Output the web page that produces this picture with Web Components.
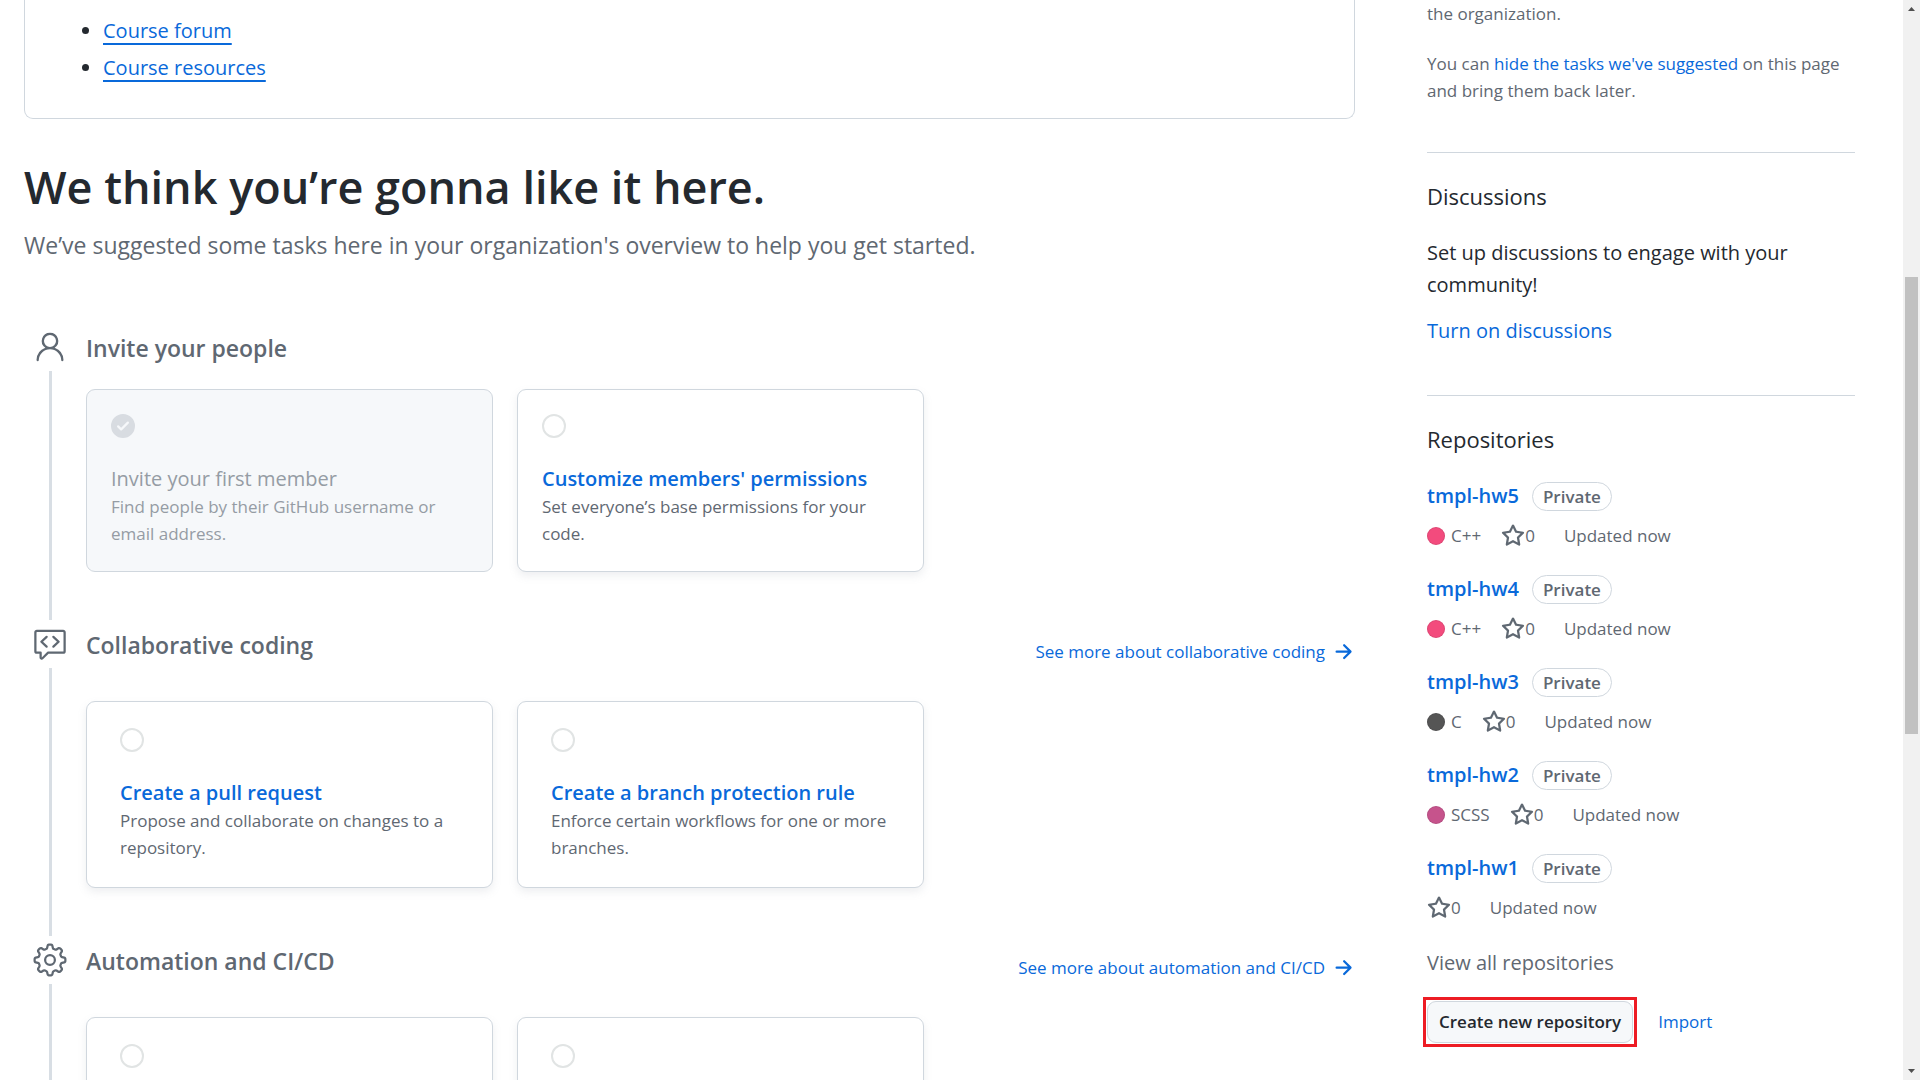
<!DOCTYPE html>
<html lang="en">
<head>
<meta charset="utf-8">
<title>Organization overview</title>
<style>
  :root {
    --fg: #24292f;
    --muted: #5f6872;
    --link: #0969da;
    --line: #d0d7de;
    --rail: #d8dee4;
    --text-s: 17px;
    --text-m: 20px;
    --text-l: 22px;
    --text-xl: 23px;
  }
  html, body { height: 100%; }
  body {
    margin: 0;
    overflow: hidden;
    background: #fff;
    color: var(--fg);
    font-family: "Open Sans", "Noto Sans", sans-serif;
    font-size: var(--text-m);
    line-height: 32px;
  }
</style>
</head>
<body>
<org-page>
  <readme-box slot="main">
    <a href="#forum">Course forum</a>
    <a href="#resources">Course resources</a>
  </readme-box>
  <page-intro slot="main" heading="We think you’re gonna like it here.">We’ve suggested some tasks here in your organization's overview to help you get started.</page-intro>
  <task-section slot="main" icon="person" heading="Invite your people">
    <task-card done heading="Invite your first member">Find people by their GitHub username or email address.</task-card>
    <task-card heading="Customize members' permissions">Set everyone’s base permissions for your code.</task-card>
  </task-section>
  <task-section slot="main" icon="review" heading="Collaborative coding" more="See more about collaborative coding">
    <task-card wide heading="Create a pull request">Propose and collaborate on changes to a repository.</task-card>
    <task-card wide heading="Create a branch protection rule">Enforce certain workflows for one or more branches.</task-card>
  </task-section>
  <task-section slot="main" icon="gear" heading="Automation and CI/CD" more="See more about automation and CI/CD">
    <task-card wide></task-card>
    <task-card wide></task-card>
  </task-section>

  <side-note slot="side"></side-note>
  <side-section slot="side" heading="Discussions">
    <discussion-prompt></discussion-prompt>
  </side-section>
  <side-section slot="side" heading="Repositories">
    <repo-item name="tmpl-hw5" lang="C++" color="#f34b7d"></repo-item>
    <repo-item name="tmpl-hw4" lang="C++" color="#f34b7d"></repo-item>
    <repo-item name="tmpl-hw3" lang="C" color="#555555"></repo-item>
    <repo-item name="tmpl-hw2" lang="SCSS" color="#c6538c"></repo-item>
    <repo-item name="tmpl-hw1"></repo-item>
    <repo-actions></repo-actions>
  </side-section>
</org-page>

<script>
const ICONS = {
  person: [24, 'M12 2.5a5.5 5.5 0 013.096 10.047 9.005 9.005 0 015.9 8.181.75.75 0 11-1.499.044 7.5 7.5 0 00-14.993 0 .75.75 0 01-1.5-.045 9.005 9.005 0 015.9-8.18A5.5 5.5 0 0112 2.5zM8 8a4 4 0 118 0 4 4 0 01-8 0z'],
  review: [24, 'M10.3 6.74a.75.75 0 01-.04 1.06l-2.908 2.7 2.908 2.7a.75.75 0 11-1.02 1.1l-3.5-3.25a.75.75 0 010-1.1l3.5-3.25a.75.75 0 011.06.04zm3.44 1.06a.75.75 0 111.02-1.1l3.5 3.25a.75.75 0 010 1.1l-3.5 3.25a.75.75 0 11-1.02-1.1l2.908-2.7-2.908-2.7zM1.5 4.25c0-.966.784-1.75 1.75-1.75h17.5c.966 0 1.75.784 1.75 1.75v12.5a1.75 1.75 0 01-1.75 1.75h-9.69l-3.573 3.573A1.457 1.457 0 015 21.043V18.5H3.25a1.75 1.75 0 01-1.75-1.75V4.25zM3.25 4a.25.25 0 00-.25.25v12.5c0 .138.112.25.25.25h2.5a.75.75 0 01.75.75v3.19l3.72-3.72a.75.75 0 01.53-.22h10a.25.25 0 00.25-.25V4.25a.25.25 0 00-.25-.25H3.25z'],
  gear: [24, 'M16 12a4 4 0 11-8 0 4 4 0 018 0zm-1.5 0a2.5 2.5 0 11-5 0 2.5 2.5 0 015 0zM12 1c-.268 0-.534.01-.797.028-.763.055-1.345.617-1.512 1.304l-.352 1.45c-.02.078-.09.172-.225.22a8.45 8.45 0 00-.728.303c-.13.06-.246.044-.315.002l-1.274-.776c-.604-.368-1.412-.354-1.99.147-.403.348-.78.726-1.129 1.128-.5.579-.515 1.387-.147 1.99l.776 1.275c.042.069.059.185-.002.315-.112.237-.213.48-.302.728-.05.135-.143.206-.221.225l-1.45.352c-.687.167-1.249.749-1.304 1.512a11.149 11.149 0 000 1.594c.055.763.617 1.345 1.304 1.512l1.45.352c.078.02.172.09.22.225.09.248.191.491.303.729.06.129.044.245.002.314l-.776 1.274c-.368.604-.354 1.412.147 1.99.348.403.726.78 1.128 1.129.579.5 1.387.515 1.99.147l1.275-.776c.069-.042.185-.059.315.002.237.112.48.213.728.302.135.05.206.143.225.221l.352 1.45c.167.687.749 1.249 1.512 1.303a11.125 11.125 0 001.594 0c.763-.054 1.345-.616 1.512-1.303l.352-1.45c.02-.078.09-.172.225-.22.248-.09.491-.191.729-.303.129-.06.245-.044.314-.002l1.274.776c.604.368 1.412.354 1.99-.147.403-.348.78-.726 1.129-1.128.5-.579.515-1.387.147-1.99l-.776-1.275c-.042-.069-.059-.185.002-.315.112-.237.213-.48.302-.728.05-.135.143-.206.221-.225l1.45-.352c.687-.167 1.249-.749 1.303-1.512a11.125 11.125 0 000-1.594c-.054-.763-.616-1.345-1.303-1.512l-1.45-.352c-.078-.02-.172-.09-.22-.225a8.469 8.469 0 00-.303-.728c-.06-.13-.044-.246-.002-.315l.776-1.274c.368-.604.354-1.412-.147-1.99-.348-.403-.726-.78-1.128-1.129-.579-.5-1.387-.515-1.99-.147l-1.275.776c-.069.042-.185.059-.315-.002a8.465 8.465 0 00-.728-.302c-.135-.05-.206-.143-.225-.221l-.352-1.45c-.167-.687-.749-1.249-1.512-1.304A11.149 11.149 0 0012 1zm-.69 1.525a9.648 9.648 0 011.38 0c.055.004.135.05.162.16l.351 1.45c.153.628.626 1.08 1.173 1.278.205.074.405.157.6.249a1.832 1.832 0 001.733-.074l1.275-.776c.097-.06.186-.036.228 0 .348.302.674.628.976.976.036.042.06.13 0 .228l-.776 1.274a1.832 1.832 0 00-.074 1.734c.092.195.175.395.248.6.198.547.652 1.02 1.278 1.172l1.45.353c.111.026.157.106.161.161a9.653 9.653 0 010 1.38c-.004.055-.05.135-.16.162l-1.45.351a1.833 1.833 0 00-1.278 1.173 6.926 6.926 0 01-.25.6 1.832 1.832 0 00.075 1.733l.776 1.275c.06.097.036.186 0 .228a9.555 9.555 0 01-.976.976c-.042.036-.13.06-.228 0l-1.275-.776a1.832 1.832 0 00-1.733-.074 6.926 6.926 0 01-.6.248 1.833 1.833 0 00-1.172 1.278l-.353 1.45c-.026.111-.106.157-.161.161a9.653 9.653 0 01-1.38 0c-.055-.004-.135-.05-.162-.16l-.351-1.45a1.833 1.833 0 00-1.173-1.278 6.928 6.928 0 01-.6-.25 1.832 1.832 0 00-1.734.075l-1.274.776c-.097.06-.186.036-.228 0a9.56 9.56 0 01-.976-.976c-.036-.042-.06-.13 0-.228l.776-1.275a1.832 1.832 0 00.074-1.733 6.948 6.948 0 01-.249-.6 1.833 1.833 0 00-1.277-1.172l-1.45-.353c-.111-.026-.157-.106-.161-.161a9.648 9.648 0 010-1.38c.004-.055.05-.135.16-.162l1.45-.351a1.833 1.833 0 001.278-1.173 6.95 6.95 0 01.249-.6 1.832 1.832 0 00-.074-1.734l-.776-1.274c-.06-.097-.036-.186 0-.228.302-.348.628-.674.976-.976.042-.036.13-.06.228 0l1.274.776a1.832 1.832 0 001.734.074 6.95 6.95 0 01.6-.249 1.833 1.833 0 001.172-1.277l.353-1.45c.026-.111.106-.157.161-.161z'],
  star: [16, 'M8 .25a.75.75 0 01.673.418l1.882 3.815 4.21.612a.75.75 0 01.416 1.279l-3.046 2.97.719 4.192a.75.75 0 01-1.088.791L8 12.347l-3.766 1.98a.75.75 0 01-1.088-.79l.72-4.194L.818 6.374a.75.75 0 01.416-1.28l4.21-.611L7.327.668A.75.75 0 018 .25zm0 2.445L6.615 5.5a.75.75 0 01-.564.41l-3.097.45 2.24 2.184a.75.75 0 01.216.664l-.528 3.084 2.769-1.456a.75.75 0 01.698 0l2.77 1.456-.53-3.084a.75.75 0 01.216-.664l2.24-2.183-3.096-.45a.75.75 0 01-.564-.41L8 2.694v.001z'],
  arrow: [16, 'M8.22 2.97a.75.75 0 011.06 0l4.25 4.25a.75.75 0 010 1.06l-4.25 4.25a.75.75 0 01-1.06-1.06l2.97-2.97H3.75a.75.75 0 010-1.5h7.44L8.22 4.03a.75.75 0 010-1.06z'],
  check: [16, 'M8 16A8 8 0 108 0a8 8 0 000 16zm3.78-9.72a.75.75 0 00-1.06-1.06L6.75 9.19 5.28 7.72a.75.75 0 00-1.06 1.06l2 2a.75.75 0 001.06 0l4.5-4.5z']
};

// Base class: renders render() into an open shadow root, with the rules every element shares.
class Base extends HTMLElement {
  connectedCallback() {
    if (this.shadowRoot) return;
    this.attachShadow({ mode: 'open' }).innerHTML = `<style>
      :host { display: block; }
      *, :host { box-sizing: border-box; }
      h1, h2, h3, p { margin: 0; font-weight: 400; }
      a { color: var(--link); text-decoration: none; }
    </style>` + this.render();
  }
  attr(name) { return this.getAttribute(name) || ''; }
}

customElements.define('svg-icon', class extends Base {
  render() {
    const [box, d] = ICONS[this.attr('name')];
    const px = box * 3 / 2;
    return `<style>
      :host { flex: none; width: ${px}px; height: ${px}px; }
      svg { display: block; width: 100%; height: 100%; fill: currentColor; }
    </style><svg viewBox="0 0 ${box} ${box}" aria-hidden="true"><path fill-rule="evenodd" d="${d}"/></svg>`;
  }
});

customElements.define('org-page', class extends Base {
  render() {
    return `<style>
      :host { display: flex; height: 100%; overflow: hidden; }
      .content { flex: 1; min-width: 0; display: grid; grid-template-columns: minmax(0, 1fr) 428px; gap: 72px; padding: 0 48px 0 24px; }
    </style>
    <div class="content">
      <main><slot name="main"></slot></main>
      <aside><slot name="side"></slot></aside>
    </div>
    <page-scrollbar></page-scrollbar>`;
  }
});

customElements.define('page-scrollbar', class extends Base {
  render() {
    return `<style>
      :host { display: flex; flex-direction: column; align-items: center; width: 17px; background: #f1f1f1; }
      svg { display: block; flex: none; width: 17px; height: 17px; fill: #505050; }
      .before { flex: 260; }
      .thumb { flex: 457; width: 13px; background: #c1c1c1; }
      .after { flex: 329; }
    </style>
    <svg viewBox="0 0 17 17"><path d="M5 11h7L8.500 7z"/></svg>
    <div class="before"></div><div class="thumb"></div><div class="after"></div>
    <svg viewBox="0 0 17 17"><path d="M5 6h7l-3.500 4z"/></svg>`;
  }
});

customElements.define('readme-box', class extends Base {
  render() {
    const items = [...this.querySelectorAll('a')].map((a, i) => {
      a.slot = 'link' + i;
      return `<li><slot name="link${i}"></slot></li>`;
    }).join('');
    return `<style>
      :host { border: 1px solid var(--line); border-top: 0; border-radius: 0 0 9px 9px; padding: 15px 48px 34px; }
      ul { margin: 0; padding: 0 0 0 30px; }
      li + li { margin-top: 5px; }
      ::slotted(a) { color: var(--link); text-decoration: underline 2px; text-underline-offset: 5px; text-decoration-skip-ink: none; }
    </style><ul>${items}</ul>`;
  }
});

customElements.define('page-intro', class extends Base {
  render() {
    return `<style>
      :host { padding: 38px 0 66px; }
      h1 { font-size: 45px; line-height: 60px; font-weight: 600; }
      p { margin-top: 10px; font-size: var(--text-xl); line-height: 36px; color: var(--muted); }
    </style><h1>${this.attr('heading')}</h1><p><slot></slot></p>`;
  }
});

customElements.define('task-section', class extends Base {
  render() {
    const more = this.attr('more');
    return `<style>
      :host { display: flex; gap: 18px; padding-left: 8px; }
      .rail { display: flex; flex-direction: column; align-items: center; gap: 6px; padding-bottom: 6px; color: var(--muted); }
      .line { flex: 1; width: 3px; background: var(--rail); }
      .body { flex: 1; min-width: 0; padding-bottom: 54px; }
      header { display: flex; justify-content: space-between; align-items: flex-end; margin-bottom: ${more ? 37 : 22}px; }
      h2 { font-size: var(--text-xl); line-height: 38px; font-weight: 600; color: var(--muted); }
      a { display: flex; align-items: center; gap: 6px; font-size: var(--text-s); line-height: 25px; }
      .cards { display: grid; grid-template-columns: repeat(3, minmax(0, 1fr)); gap: 24px; }
    </style>
    <div class="rail"><svg-icon name="${this.attr('icon')}"></svg-icon><div class="line"></div></div>
    <div class="body">
      <header><h2>${this.attr('heading')}</h2>${more ? `<a href="#more">${more}<svg-icon name="arrow"></svg-icon></a>` : ''}</header>
      <div class="cards"><slot></slot></div>
    </div>`;
  }
});

customElements.define('task-card', class extends Base {
  render() {
    const done = this.hasAttribute('done');
    const heading = this.attr('heading');
    return `<style>
      :host { min-height: 183px; padding: 24px; border: 1px solid var(--line); border-radius: 9px; background: #fff; box-shadow: 0 4px 9px rgba(140, 149, 159, .15); }
      :host([wide]) { min-height: 187px; padding: 26px 33px; }
      :host([done]) { background: #f6f8fa; box-shadow: none; }
      .ring { width: 24px; height: 24px; border: 2px solid #e1e4e4; border-radius: 50%; }
      svg-icon { color: #d8dce1; }
      h3 { margin-top: 27px; font-size: var(--text-m); line-height: 28px; font-weight: 600; }
      p { font-size: var(--text-s); line-height: 27px; color: var(--muted); }
      :host([done]) h3 { font-weight: 400; color: #959ca4; }
      :host([done]) p { color: #959ca4; }
    </style>
    ${done ? '<svg-icon name="check"></svg-icon>' : '<div class="ring"></div>'}
    ${heading ? `<h3>${done ? heading : `<a href="#task">${heading}</a>`}</h3><p><slot></slot></p>` : ''}`;
  }
});

customElements.define('side-note', class extends Base {
  render() {
    return `<style>
      :host { padding-bottom: 48px; font-size: var(--text-s); line-height: 27px; color: var(--muted); }
      p + p { margin-top: 23px; }
    </style>
    <p>the organization.</p>
    <p>You can <a href="#hide">hide the tasks we've suggested</a> on this page and bring them back later.</p>`;
  }
});

customElements.define('side-section', class extends Base {
  render() {
    return `<style>
      :host { border-top: 1px solid var(--line); padding: 24px 0 48px; }
      h2 { font-size: var(--text-l); line-height: 38px; margin-bottom: 22px; }
    </style><h2>${this.attr('heading')}</h2><slot></slot>`;
  }
});

customElements.define('discussion-prompt', class extends Base {
  render() {
    return `<style>a { display: inline-block; margin-top: 14px; vertical-align: top; }</style>
    <p>Set up discussions to engage with your community!</p><a href="#discussions">Turn on discussions</a>`;
  }
});

customElements.define('repo-item', class extends Base {
  render() {
    const lang = this.attr('lang');
    return `<style>
      :host { margin-bottom: 24px; }
      .title, .meta, .lang, .stars { display: flex; align-items: center; }
      .title { gap: 13px; height: 32px; font-weight: 600; }
      .label { padding: 0 10px; border: 1px solid var(--line); border-radius: 15px; font-size: var(--text-s); line-height: 27px; color: var(--muted); }
      .meta { margin-top: 10px; font-size: var(--text-s); line-height: 27px; color: var(--muted); }
      .lang { gap: 6px; margin-right: 20px; }
      .dot { width: 18px; height: 18px; border-radius: 50%; background: ${this.attr('color')}; box-shadow: inset 0 0 0 1px rgba(27, 31, 36, .1); }
      .stars { margin-right: 29px; color: inherit; }
    </style>
    <div class="title"><a href="#repo">${this.attr('name')}</a><span class="label">Private</span></div>
    <div class="meta">
      ${lang ? `<span class="lang"><span class="dot"></span>${lang}</span>` : ''}
      <a class="stars" href="#stars"><svg-icon name="star"></svg-icon>0</a>
      <span>Updated now</span>
    </div>`;
  }
});

customElements.define('repo-actions', class extends Base {
  render() {
    return `<style>
      :host { padding-top: 2px; }
      .all { color: var(--muted); }
      .row { display: flex; align-items: center; gap: 25px; margin-top: 22px; font-size: var(--text-s); }
      .mark { position: relative; }
      .mark::after { content: ""; position: absolute; inset: -4px; border: 3px solid #ed1c24; pointer-events: none; }
      button { display: block; height: 42px; padding: 0 11px; font: inherit; font-weight: 600; color: var(--fg); background: #f6f8fa; border: 1px solid var(--line); border-radius: 9px; }
    </style>
    <a class="all" href="#all">View all repositories</a>
    <div class="row"><span class="mark"><button type="button">Create new repository</button></span><a href="#import">Import</a></div>`;
  }
});
</script>
</body>
</html>
